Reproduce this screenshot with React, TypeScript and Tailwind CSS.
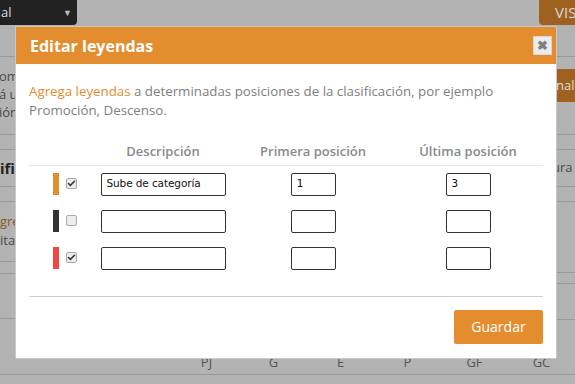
import { Check } from "lucide-react";

const rows = [
  { color: "bg-[#e38d2e]", checked: true, desc: "Sube de categoría", first: "1", last: "3" },
  { color: "bg-[#333333]", checked: false, desc: "", first: "", last: "" },
  { color: "bg-[#f04646]", checked: true, desc: "", first: "", last: "" },
];

function Box({ checked }: { checked: boolean }) {
  return (
    <span className="flex h-[11px] w-[11px] items-center justify-center rounded-[2px] border border-[#a9a9a9] bg-[#ececec]">
      {checked && <Check className="h-[9px] w-[9px] text-[#333]" strokeWidth={4} />}
    </span>
  );
}

function Background() {
  return (
    <div className="h-[384px] w-[575px] overflow-hidden bg-[#b3b3b3] font-['Open_Sans',sans-serif] text-[13px] text-[#4a4a4a]">
      <div className="flex h-[57px] items-start justify-between border-b border-[#999]">
        <div className="flex h-[25px] w-[77px] items-center justify-between rounded-br-[4px] bg-[#222] pl-[1px] pr-[5px] text-[#ddd]">
          <span>al</span>
          <span className="text-[9px] text-[#bbb]">▼</span>
        </div>
        <div className="flex h-[25px] w-[36px] items-center overflow-hidden whitespace-nowrap rounded-bl-[4px] bg-[#9f611f] pl-[16px] text-[15px] text-[#d9d9d9]">
          VIS
        </div>
      </div>
      <div className="flex justify-between">
        <div className="w-[20px]">
          <div className="h-[77px] pt-[10px] leading-[18px]">
            <div className="-ml-[1px]">omp</div>
            <div className="-ml-[1px]">á u</div>
            <div className="-ml-[1px]">ión</div>
          </div>
          <div className="h-[16px] border-y border-[#999]" />
          <div className="flex h-[36px] items-center text-[15px] font-bold text-[#222]">ifi</div>
          <div className="h-[16px] border-y border-[#999]" />
          <div className="h-[59px] pt-[10px] leading-[19px]">
            <div className="text-[#8a5523]">greg</div>
            <div>ita</div>
          </div>
          <div className="h-[13px] border-y border-[#999]" />
          <div className="h-[45px] border-b border-[#999]" />
        </div>
        <div className="w-[20px]">
          <div className="h-[77px] pt-[12px]">
            <div className="flex h-[33px] items-center bg-[#9f611f] pl-[1px] text-[#ddd]">nali</div>
          </div>
          <div className="h-[16px] border-y border-[#999]" />
          <div className="-ml-[3px] flex h-[36px] items-center">ura</div>
          <div className="h-[16px] border-y border-[#999]" />
          <div className="h-[70px]" />
          <div className="h-[12px] border-y border-[#999]" />
          <div className="h-[36px] border-b border-[#999]" />
        </div>
      </div>
      <div className="flex h-[55px] items-end border-b border-[#999] pb-[2px] pl-[173px] text-[#555]">
        <span className="w-[67px] text-center">PJ</span>
        <span className="w-[67px] text-center">G</span>
        <span className="w-[67px] text-center">E</span>
        <span className="w-[67px] text-center">P</span>
        <span className="w-[67px] text-center">GF</span>
        <span className="w-[67px] text-center">GC</span>
      </div>
    </div>
  );
}

export default function App() {
  return (
    <div className="relative h-[384px] w-[575px] overflow-hidden">
      <Background />
      <div className="absolute left-[15px] top-[26px] w-[542px] border border-[#c8c8c8] bg-white font-['Open_Sans',sans-serif]">
        <div className="flex h-[37px] items-center justify-between bg-[#e38d2e] pl-[14px] pr-[4px]">
          <h2 className="text-[16px] font-bold text-white">Editar leyendas</h2>
          <button className="flex h-[19px] w-[19px] items-center justify-center border border-[#d6d6d6] bg-[#ececec] text-[13px] font-bold leading-none text-[#808080]">
            ✖
          </button>
        </div>
        <div className="px-[13px] pb-[14px] pt-[18px]">
          <p className="text-[13.3px] leading-[19px] text-[#808080]">
            <span className="text-[#e38d2e]">Agrega leyendas</span> a determinadas posiciones de la
            clasificación, por ejemplo Promoción, Descenso.
          </p>
          <div className="mt-[22px]">
            <div className="grid grid-cols-[64px_140px_160px_150px] border-b border-[#e6e6e6] pb-[3px] text-[13px] font-semibold text-[#8a8a8a]">
              <span />
              <span className="text-center">Descripción</span>
              <span className="text-center">Primera posición</span>
              <span className="text-center">Última posición</span>
            </div>
            <div className="pt-[7px]">
              {rows.map((r, i) => (
                <div key={i} className="grid h-[37px] grid-cols-[64px_140px_160px_150px] items-start">
                  <div className="flex items-center pl-[24px]">
                    <span className={`h-[22px] w-[6px] ${r.color}`} />
                    <span className="ml-[7px]">
                      <Box checked={r.checked} />
                    </span>
                  </div>
                  <div className="flex justify-center">
                    <div className="flex h-[23px] w-[125px] items-center rounded-[2px] border border-[#333] px-[5px] font-['DejaVu_Sans',sans-serif] text-[10.5px] tracking-[-0.1px] text-[#111]">
                      {r.desc}
                    </div>
                  </div>
                  <div className="flex justify-center">
                    <div className="flex h-[23px] w-[45px] items-center rounded-[2px] border border-[#333] px-[5px] font-['DejaVu_Sans_Mono',monospace] text-[11px] text-[#111]">
                      {r.first}
                    </div>
                  </div>
                  <div className="flex justify-center">
                    <div className="flex h-[23px] w-[45px] items-center rounded-[2px] border border-[#333] px-[5px] font-['DejaVu_Sans_Mono',monospace] text-[11px] text-[#111]">
                      {r.last}
                    </div>
                  </div>
                </div>
              ))}
            </div>
          </div>
          <div className="mt-[12px] border-t border-[#cfcfcf] pt-[13px]">
            <div className="flex justify-end">
              <button className="h-[34px] w-[89px] rounded-[2px] bg-[#e38d2e] text-[14px] text-white">
                Guardar
              </button>
            </div>
          </div>
        </div>
      </div>
    </div>
  );
}
